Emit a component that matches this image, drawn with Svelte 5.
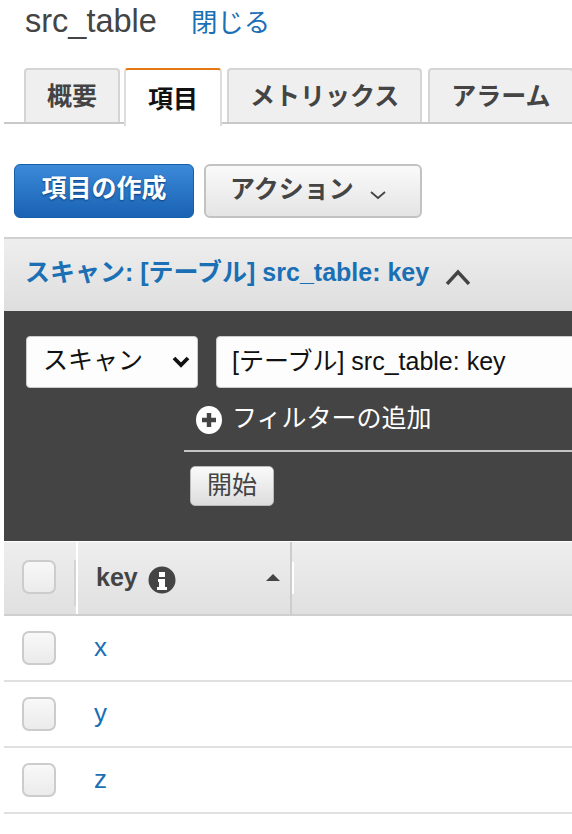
<script>
  const tabs = ['概要', '項目', 'メトリックス', 'アラーム'];
  const rows = ['x', 'y', 'z'];
  let activeTab = $state('項目');
</script>

<style>
  :global(body) {
    margin: 0;
    background: #fff;
    overflow: hidden;
  }

  .page {
    width: 572px;
    height: 834px;
    overflow: hidden;
    box-sizing: border-box;
    padding-left: 4px;
    font-family: "Liberation Sans", "Noto Sans CJK JP", sans-serif;
    color: #444;
  }

  .title {
    display: flex;
    align-items: baseline;
    gap: 34px;
    height: 68px;
    padding: 0 0 0 21px;
    box-sizing: border-box;
    font-size: 32.5px;
    line-height: 42px;
  }

  .title a {
    font-size: 26.5px;
    color: #1a6fb5;
    text-decoration: none;
  }

  .tabs {
    display: flex;
    gap: 6px;
    height: 56px;
    box-sizing: border-box;
    padding-left: 20px;
    border-bottom: 2px solid #c9c9c9;
  }

  .tab {
    flex: none;
    height: 54px;
    box-sizing: border-box;
    padding: 0 21px;
    border: 2px solid #d5d5d5;
    border-bottom: none;
    border-radius: 4px 4px 0 0;
    background: #efefef;
    color: #444;
    font: bold 25px/52px "Liberation Sans", "Noto Sans CJK JP", sans-serif;
  }

  .tab.active {
    height: 58px;
    margin: 0 -1px 0 -2px;
    padding: 3px 22px 0;
    background: #fff;
    color: #111;
    border-top: 2px solid #e47911;
    border-left-color: #ddd;
    border-right-color: #ddd;
    position: relative;
  }

  .actions {
    display: flex;
    gap: 10px;
    padding: 40px 0 19px 10px;
  }

  .btn {
    height: 54px;
    box-sizing: border-box;
    border-radius: 6px;
    font: bold 25px/47px "Liberation Sans", "Noto Sans CJK JP", sans-serif;
  }

  .primary {
    width: 180px;
    border: 1px solid #155ea8;
    background: linear-gradient(#3b8ad8, #1a62b4);
    color: #fff;
    text-align: center;
    text-shadow: 0 1px 2px #0d3d75;
  }

  .secondary {
    display: flex;
    align-items: center;
    width: 218px;
    padding: 0 0 3px 24px;
    border: 2px solid #c2c2c2;
    background: linear-gradient(#fafafa, #e4e4e4);
    color: #444;
  }

  .secondary svg {
    margin-left: 15px;
    margin-top: 10px;
  }

  .scan-head {
    display: flex;
    align-items: center;
    gap: 16px;
    height: 74px;
    box-sizing: border-box;
    padding: 0 0 10px 21px;
    border-top: 2px solid #d0d0d0;
    background: linear-gradient(#eee, #dedede);
    color: #1a6fb5;
    font-size: 25px;
    font-weight: bold;
  }

  .scan-head svg {
    margin-top: 14px;
  }

  .panel {
    height: 230px;
    box-sizing: border-box;
    padding-top: 25px;
    background: #444;
  }

  .query {
    display: flex;
    gap: 18px;
    padding-left: 22px;
  }

  .field {
    height: 52px;
    box-sizing: border-box;
    background: #fdfdfd;
    border: 1px solid #ccc;
    border-radius: 4px;
    color: #111;
    font-size: 25px;
    line-height: 48px;
  }

  .select {
    flex: none;
    display: flex;
    align-items: center;
    justify-content: space-between;
    width: 172px;
    padding: 0 7px 0 16px;
  }

  .select span {
    margin-top: -4px;
  }

  .input {
    flex: none;
    width: 400px;
    padding-left: 15px;
  }

  .filter {
    display: flex;
    align-items: center;
    gap: 10px;
    height: 64px;
    box-sizing: border-box;
    margin-left: 180px;
    padding: 0 0 2px 12px;
    border-bottom: 2px solid #c4c4c4;
    color: #fff;
    font-size: 25px;
  }

  .filter span {
    margin-top: -4px;
  }

  .filter svg {
    margin-top: 4px;
  }

  .start {
    display: block;
    width: 84px;
    height: 40px;
    box-sizing: border-box;
    margin: 14px 0 0 186px;
    border: 1px solid #bbb;
    border-radius: 5px;
    background: linear-gradient(#fafafa, #ddd);
    color: #444;
    font-size: 25px;
    line-height: 36px;
    text-align: center;
  }

  .thead {
    display: flex;
    height: 74px;
    margin-top: 1px;
    box-sizing: border-box;
    border-bottom: 2px solid #cfcfcf;
    background: linear-gradient(#eee, #e0e0e0);
  }

  .check-cell {
    flex: none;
    display: flex;
    align-items: center;
    width: 72px;
    padding-left: 18px;
    box-sizing: border-box;
  }

  .thead .check-cell {
    position: relative;
    width: 74px;
    border-right: 2px solid #fff;
    padding-bottom: 2px;
  }

  .thead .check-cell::after {
    content: "";
    position: absolute;
    top: 18px;
    right: 0;
    width: 2px;
    height: 46px;
    background: #d4d4d4;
  }

  .key-cell {
    position: relative;
    flex: none;
    display: flex;
    align-items: center;
    width: 214px;
    box-sizing: border-box;
    padding: 0 0 2px 18px;
    border-right: 2px solid #cdcdcd;
    color: #444;
    font-size: 25px;
    font-weight: bold;
  }

  .key-cell::after {
    content: "";
    position: absolute;
    top: 20px;
    right: -4px;
    width: 2px;
    height: 32px;
    background: #fff;
  }

  .key-cell svg.info {
    margin: 6px 0 0 10px;
  }

  .caret {
    margin-left: auto;
    margin-right: 10px;
    width: 0;
    height: 0;
    border: 7px solid transparent;
    border-top: none;
    border-bottom: 7px solid #444;
  }

  .check {
    width: 34px;
    height: 34px;
    box-sizing: border-box;
    border: 2px solid #ccc;
    border-radius: 7px;
    background: linear-gradient(#f8f8f8, #ebebeb);
  }

  .row {
    display: flex;
    align-items: center;
    height: 66px;
    box-sizing: border-box;
    padding-bottom: 1px;
    border-bottom: 2px solid #e0e0e0;
  }

  .row a {
    margin-left: 18px;
    color: #1a6fb5;
    font-size: 26px;
    text-decoration: none;
  }
</style>

<div class="page">
  <div class="title">
    <span>src_table</span>
    <a href="#close">閉じる</a>
  </div>

  <div class="tabs">
    {#each tabs as tab}
      <div class="tab" class:active={tab === activeTab}>{tab}</div>
    {/each}
  </div>

  <div class="actions">
    <div class="btn primary">項目の作成</div>
    <div class="btn secondary">
      アクション
      <svg width="18" height="10" viewBox="0 0 18 10" fill="none" stroke="#444" stroke-width="1.8"><path d="M2 2l7 6 7-6" /></svg>
    </div>
  </div>

  <div class="scan-head">
    <span>スキャン: [テーブル] src_table: key</span>
    <svg width="26" height="16" viewBox="0 0 26 16" fill="none" stroke="#444" stroke-width="3.4"><path d="M2 15L13 3l11 12" /></svg>
  </div>

  <div class="panel">
    <div class="query">
      <div class="field select">
        <span>スキャン</span>
        <svg width="18" height="12" viewBox="0 0 18 12" fill="none" stroke="#111" stroke-width="3.8"><path d="M2 2l7 7 7-7" /></svg>
      </div>
      <div class="field input">[テーブル] src_table: key</div>
    </div>
    <div class="filter">
      <svg width="26" height="28" viewBox="0 0 26 28"><ellipse cx="13" cy="14" rx="13" ry="14" fill="#fff" /><path d="M13 7v14M6 14h14" stroke="#444" stroke-width="4.4" /></svg>
      <span>フィルターの追加</span>
    </div>
    <div class="start">開始</div>
  </div>

  <div class="thead">
    <div class="check-cell"><div class="check"></div></div>
    <div class="key-cell">
      <span>key</span>
      <svg class="info" width="28" height="28" viewBox="0 0 28 28"><circle cx="14" cy="14" r="13.5" fill="#444" /><path d="M11 6h6v5h-6zM10 13h7v8h2v3H9v-3h2v-5h-1z" fill="#fff" /></svg>
      <div class="caret"></div>
    </div>
  </div>

  {#each rows as row}
    <div class="row">
      <div class="check-cell"><div class="check"></div></div>
      <a href="#{row}">{row}</a>
    </div>
  {/each}
</div>
